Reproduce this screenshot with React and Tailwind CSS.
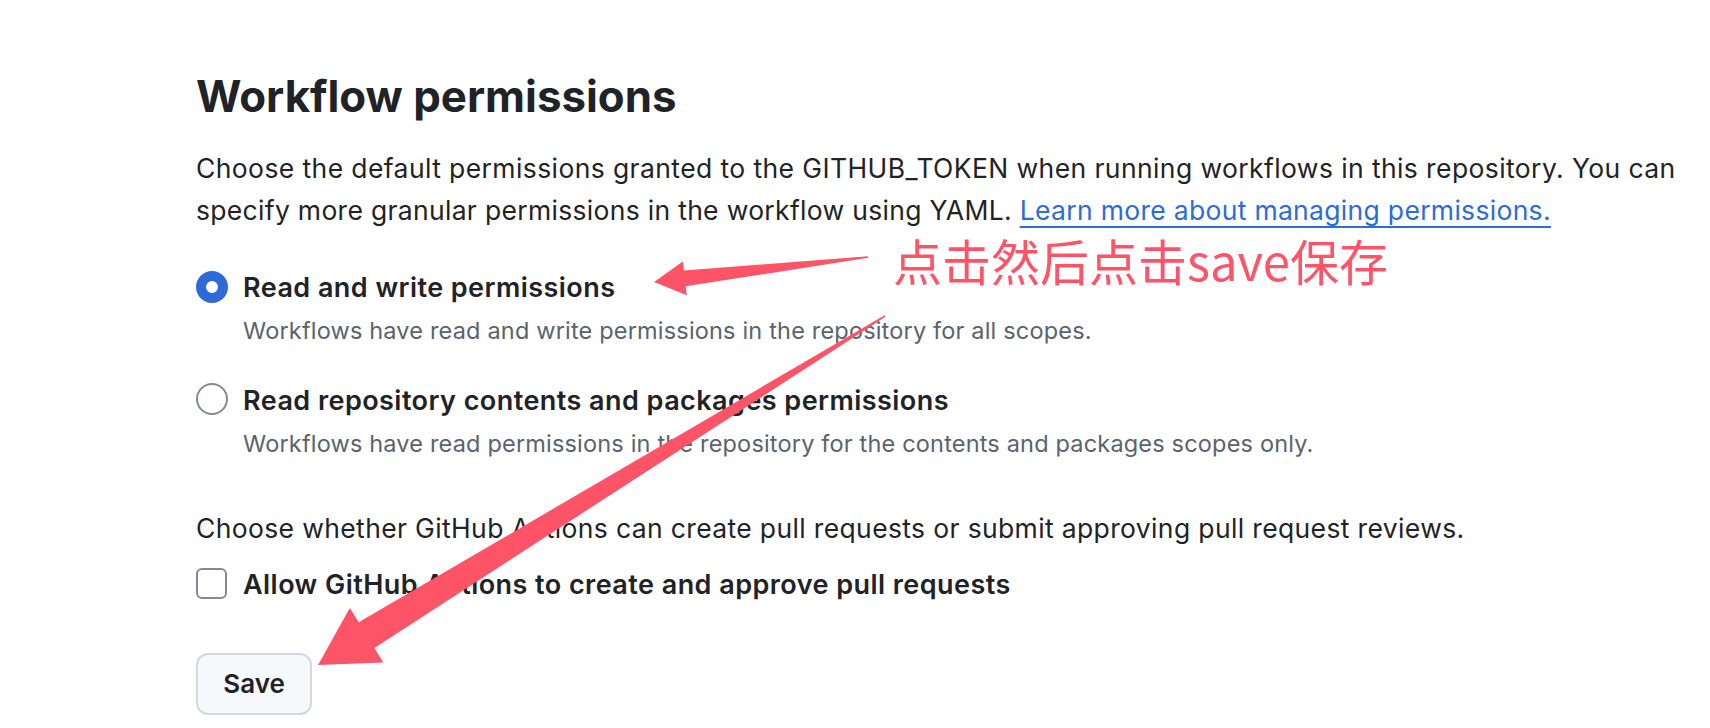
import React from 'react';

// builds a tapered arrow polygon (thin tail, wide head) from tail to tip
const arrowPoints = (tip, tail, headLen, headHalf, shaftHalf, tailHalf) => {
    const dx = tail[0] - tip[0];
    const dy = tail[1] - tip[1];
    const len = Math.hypot(dx, dy);
    const ux = dx / len;
    const uy = dy / len;
    const nx = -uy;
    const ny = ux;
    const bx = tip[0] + ux * headLen;
    const by = tip[1] + uy * headLen;
    const pts = [
        [tip[0], tip[1]],
        [bx + nx * headHalf, by + ny * headHalf],
        [bx + nx * shaftHalf, by + ny * shaftHalf],
        [tail[0] + nx * tailHalf, tail[1] + ny * tailHalf],
        [tail[0] - nx * tailHalf, tail[1] - ny * tailHalf],
        [bx - nx * shaftHalf, by - ny * shaftHalf],
        [bx - nx * headHalf, by - ny * headHalf],
    ];
    return pts.map((p) => `${p[0].toFixed(1)},${p[1].toFixed(1)}`).join(' ');
};

const RadioOption = ({ checked, label, description }) => (
    <div className="flex items-start gap-[15px]">
        {checked ? (
            <span className="mt-[0.8px] w-[32px] h-[32px] shrink-0 rounded-full border-[10px] border-[#2f6bd8] bg-white" />
        ) : (
            <span className="mt-[0.3px] w-[32px] h-[32px] shrink-0 rounded-full border-2 border-[#818b98] bg-white" />
        )}
        <div>
            <div className="text-[27px] leading-[36px] font-semibold tracking-[0.45px] whitespace-nowrap">{label}</div>
            <div className="mt-[9.3px] text-[23.5px] leading-[32px] tracking-[0.18px] text-[#59636e] whitespace-nowrap">
                {description}
            </div>
        </div>
    </div>
);

const App = () => {
    return (
        <div className="relative w-full h-[728px] bg-white overflow-hidden font-['Inter','Liberation_Sans',sans-serif]">
            <div className="pl-[196px] pt-[71px] text-[#1f2328]">
                <h2 className="text-[43.8px] leading-[52px] font-bold whitespace-nowrap">
                    Workflow permissions
                </h2>
                <p className="mt-[24.4px] text-[26.5px] leading-[42px] tracking-[0.4px] whitespace-nowrap">
                    Choose the default permissions granted to the GITHUB_TOKEN when running workflows in this repository. You can
                    <br />
                    <span className="tracking-[0.31px]">
                        specify more granular permissions in the workflow using YAML.{' '}
                        <a href="#" className="text-[#2c6cd6] underline decoration-2 underline-offset-[6px]">
                            Learn more about managing permissions.
                        </a>
                    </span>
                </p>

                <div className="mt-[38.8px]">
                    <RadioOption
                        checked
                        label="Read and write permissions"
                        description="Workflows have read and write permissions in the repository for all scopes."
                    />
                </div>
                <div className="mt-[35.2px]">
                    <RadioOption
                        label="Read repository contents and packages permissions"
                        description="Workflows have read permissions in the repository for the contents and packages scopes only."
                    />
                </div>

                <p className="mt-[47.4px] text-[26.5px] leading-[42px] tracking-[0.36px] whitespace-nowrap">
                    Choose whether GitHub Actions can create pull requests or submit approving pull request reviews.
                </p>

                <div className="mt-[17.6px] flex items-start gap-[16px]">
                    <span className="mt-[1px] w-[31px] h-[31px] shrink-0 rounded-[6px] border-2 border-[#818b98] bg-white" />
                    <span className="text-[27px] leading-[36px] font-semibold tracking-[0.45px] whitespace-nowrap">
                        Allow GitHub Actions to create and approve pull requests
                    </span>
                </div>

                <button className="mt-[50px] w-[116px] h-[62px] rounded-[12px] border-2 border-[#d1d9e0] bg-[#f6f8fa] text-[26px] font-semibold text-[#1f2328]">
                    Save
                </button>
            </div>

            {/* annotation overlay */}
            <div className="absolute left-[893px] top-[235px] text-[49px] leading-[49px] text-[#ff5468] whitespace-nowrap font-['Noto_Sans_CJK_SC','Inter',sans-serif]">
                点击然后点击save保存
            </div>
            <svg className="absolute inset-0 pointer-events-none" width="1710" height="728" viewBox="0 0 1710 728">
                <polygon points={arrowPoints([654, 282], [868, 257], 31, 17, 8, 0.8)} fill="#ff5468" />
                <polygon points={arrowPoints([318, 665], [885, 316], 57, 32, 15, 0.8)} fill="#ff5468" />
            </svg>
        </div>
    );
};

export default App;
